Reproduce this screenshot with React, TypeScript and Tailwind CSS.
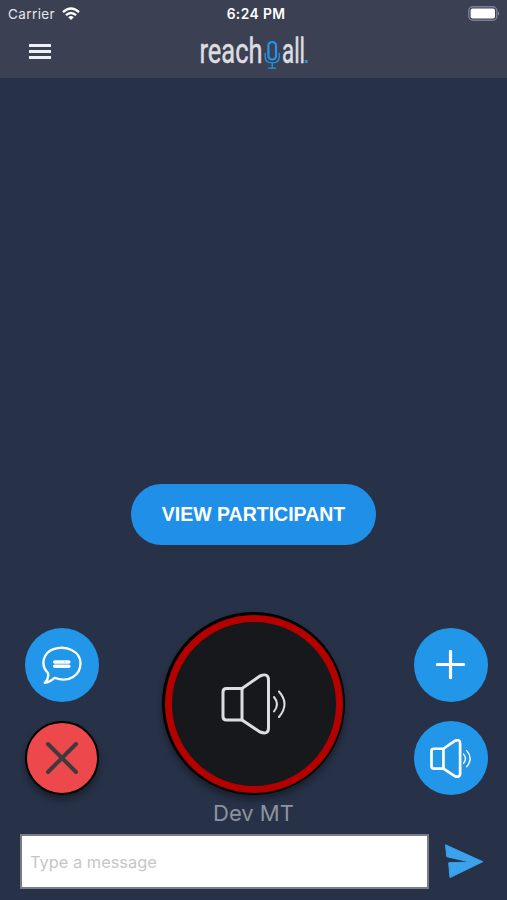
import type { ReactNode } from 'react'

function WifiIcon() {
  return (
    <svg width="18" height="14" viewBox="0 0 18 14" fill="none" stroke="#fff" strokeWidth="2.3">
      <path d="M1 5.1 Q9 -2.1 17 5.1" />
      <path d="M3.9 8.2 Q9 3.7 14.1 8.2" />
      <path d="M9 13 L6.2 10.2 Q9 8 11.8 10.2 Z" fill="#fff" stroke="none" />
    </svg>
  )
}

function BatteryIcon() {
  return (
    <svg width="32" height="16" viewBox="0 0 32 16">
      <rect x="0.8" y="0.8" width="28" height="13.4" rx="4" fill="none" stroke="#7b8193" strokeWidth="1.4" />
      <rect x="2.6" y="2.6" width="24.4" height="9.8" rx="2" fill="#fff" />
      <path d="M30.2 5.5 Q32.2 7.6 30.2 9.7 Z" fill="#9a9eab" />
    </svg>
  )
}

function Logo() {
  return (
    <svg width="112" height="46" viewBox="0 0 112 46" fontFamily="Roboto, sans-serif" fontSize="25" fill="#dddde0">
      <g transform="translate(0 34.5) scale(1 1.4)" stroke="#dddde0" strokeWidth="0.4" strokeLinejoin="round">
        <text x="0.5" y="0" textLength="63" lengthAdjust="spacingAndGlyphs">reach</text>
        <text x="83" y="0" textLength="23" lengthAdjust="spacingAndGlyphs">all</text>
      </g>
      <g fill="none" stroke="#2196ea">
        <rect x="69.4" y="14" width="7.6" height="17.5" rx="3.8" strokeWidth="2.2" />
        <path d="M66.2 25v4.2q0 5.6 7 5.6t7-5.6V25" strokeWidth="1.3" />
        <path d="M73.2 35v5M69.2 40.2h8" strokeWidth="1.3" />
      </g>
      <rect x="105.8" y="32" width="2.8" height="3" fill="#2196ea" />
    </svg>
  )
}

function SpeakerIcon({ width, height, strokeWidth, waveWidth, color }: {
  width: number
  height: number
  strokeWidth: number
  waveWidth: number
  color: string
}) {
  return (
    <svg width={width} height={height} viewBox="0 0 66 62" fill="none" stroke={color} strokeLinecap="round" strokeLinejoin="round">
      <g strokeWidth={strokeWidth}>
        <path d="M21 15.5H5.5Q2 15.5 2 19v24.5Q2 47 5.5 47H21" />
        <path d="M21 16v30.5" />
        <path d="M21 15.5 39 3Q47.5-.5 47.5 7v48q0 7-8.5 4L21 47" />
      </g>
      <g strokeWidth={waveWidth}>
        <path d="M53 24q6 7 0 14.5" />
        <path d="M58 18.5q11 12.5 0 25.5" />
      </g>
    </svg>
  )
}

function ChatIcon() {
  return (
    <svg width="42" height="39" viewBox="0 0 42 39" fill="none" stroke="#fff">
      <path
        d="M7 27C-1 19 2 7 12.5 3.2 26-1.3 39.5 6 39.5 17.3 39.5 30 27 37 13.5 31.8 10.5 34.5 7.5 36.5 3.8 36.8 6.5 34 7.8 30.5 7 27Z"
        strokeWidth="2.3"
        strokeLinejoin="round"
      />
      <path d="M13.8 16h14M13.8 20.3h14" strokeWidth="3.6" strokeLinecap="round" />
      <path d="M23.5 15.8h.8" stroke="#76bff1" strokeWidth="1.2" />
    </svg>
  )
}

function RoundButton({ label, children }: { label: string; children: ReactNode }) {
  return (
    <button aria-label={label} className="flex h-[74px] w-[74px] items-center justify-center rounded-full bg-[#2297e9]">
      {children}
    </button>
  )
}

export default function App() {
  return (
    <main className="flex h-[900px] w-[507px] flex-col overflow-hidden bg-[#273147] font-['Inter',sans-serif]">
      <header className="h-[78px] shrink-0 bg-[#3b4153]">
        <div className="grid h-7 grid-cols-3 items-center pr-[7px] pl-2 text-[13.5px] text-white">
          <div className="flex items-center gap-[7px] text-[#e5e6ea]">
            <span className="tracking-[0.4px]">Carrier</span>
            <WifiIcon />
          </div>
          <span className="pt-px pl-1 text-center text-[13.8px] font-semibold tracking-[0.4px]">6:24 PM</span>
          <div className="flex justify-end">
            <BatteryIcon />
          </div>
        </div>
        <div className="flex pl-[29px]">
          <button aria-label="Menu" className="mt-4 flex h-[17px] w-[22px] flex-col gap-[3.5px]">
            <span className="h-[2.5px] w-full shrink-0 bg-[#eff0f3]" />
            <span className="h-[2.5px] w-full shrink-0 bg-[#eff0f3]" />
            <span className="h-[2.5px] w-full shrink-0 bg-[#eff0f3]" />
          </button>
          <div className="ml-[148px]">
            <Logo />
          </div>
        </div>
      </header>

      <section className="flex h-[534px] shrink-0 flex-col items-center justify-end pb-[67px]">
        <button className="h-[61px] w-[245px] rounded-full bg-[#208fe8] font-['Liberation_Sans',sans-serif] text-[19.5px] font-bold text-white">
          VIEW PARTICIPANT
        </button>
      </section>

      <section className="flex h-[222px] shrink-0 pl-[25px]">
        <div className="flex flex-col gap-[19px] pt-4">
          <RoundButton label="Chat">
            <ChatIcon />
          </RoundButton>
          <button
            aria-label="End call"
            className="flex h-[74px] w-[74px] items-center justify-center rounded-full border-[2.5px] border-black bg-[#ed484c] shadow-[0_5px_6px_rgba(0,0,0,0.35)]"
          >
            <svg width="34" height="34" viewBox="0 0 34 34" stroke="#3d3b3d" strokeWidth="4" strokeLinecap="round">
              <path d="M3 3 31 31M31 3 3 31" />
            </svg>
          </button>
        </div>

        <div className="ml-[63px] flex flex-col items-center">
          <button
            aria-label="Push to talk"
            className="h-[183px] w-[183px] rounded-full bg-black p-[2.5px] shadow-[0_5px_6px_rgba(0,0,0,0.35)]"
          >
            <span className="flex h-full w-full items-center justify-center rounded-full border-[7px] border-[#b50000] bg-[#17181c]">
              <SpeakerIcon width={66} height={62} strokeWidth={3} waveWidth={2} color="#dedee0" />
            </span>
          </button>
          <p className="mt-0.5 text-[22px] leading-8 text-[#8d939e]">Dev MT</p>
        </div>

        <div className="ml-[69px] flex flex-col gap-[19px] pt-4">
          <RoundButton label="Add">
            <svg width="30" height="30" viewBox="0 0 30 30" stroke="#fff" strokeWidth="3.2" strokeLinecap="round">
              <path d="M14.5 1.3v26.4M1.3 14.5h26.4" />
            </svg>
          </RoundButton>
          <RoundButton label="Speaker">
            <SpeakerIcon width={42} height={39} strokeWidth={4.3} waveWidth={2.2} color="#fff" />
          </RoundButton>
        </div>
      </section>

      <form className="flex items-center pl-5">
        <input
          type="text"
          placeholder="Type a message"
          className="h-[55px] w-[409px] border-2 border-[#787c84] bg-white px-2 text-[16.4px] text-gray-800 placeholder:text-[#c5c6c9]"
        />
        <button type="button" aria-label="Send" className="ml-4">
          <svg width="39" height="36" viewBox="0 0 39 36" fill="#3ba2ec" stroke="#3ba2ec" strokeLinejoin="round">
            <path d="M.5 .8 37.8 17.7 5 33.6 3.7 18.8 25 18 1.8 12.7Z" />
          </svg>
        </button>
      </form>
    </main>
  )
}
